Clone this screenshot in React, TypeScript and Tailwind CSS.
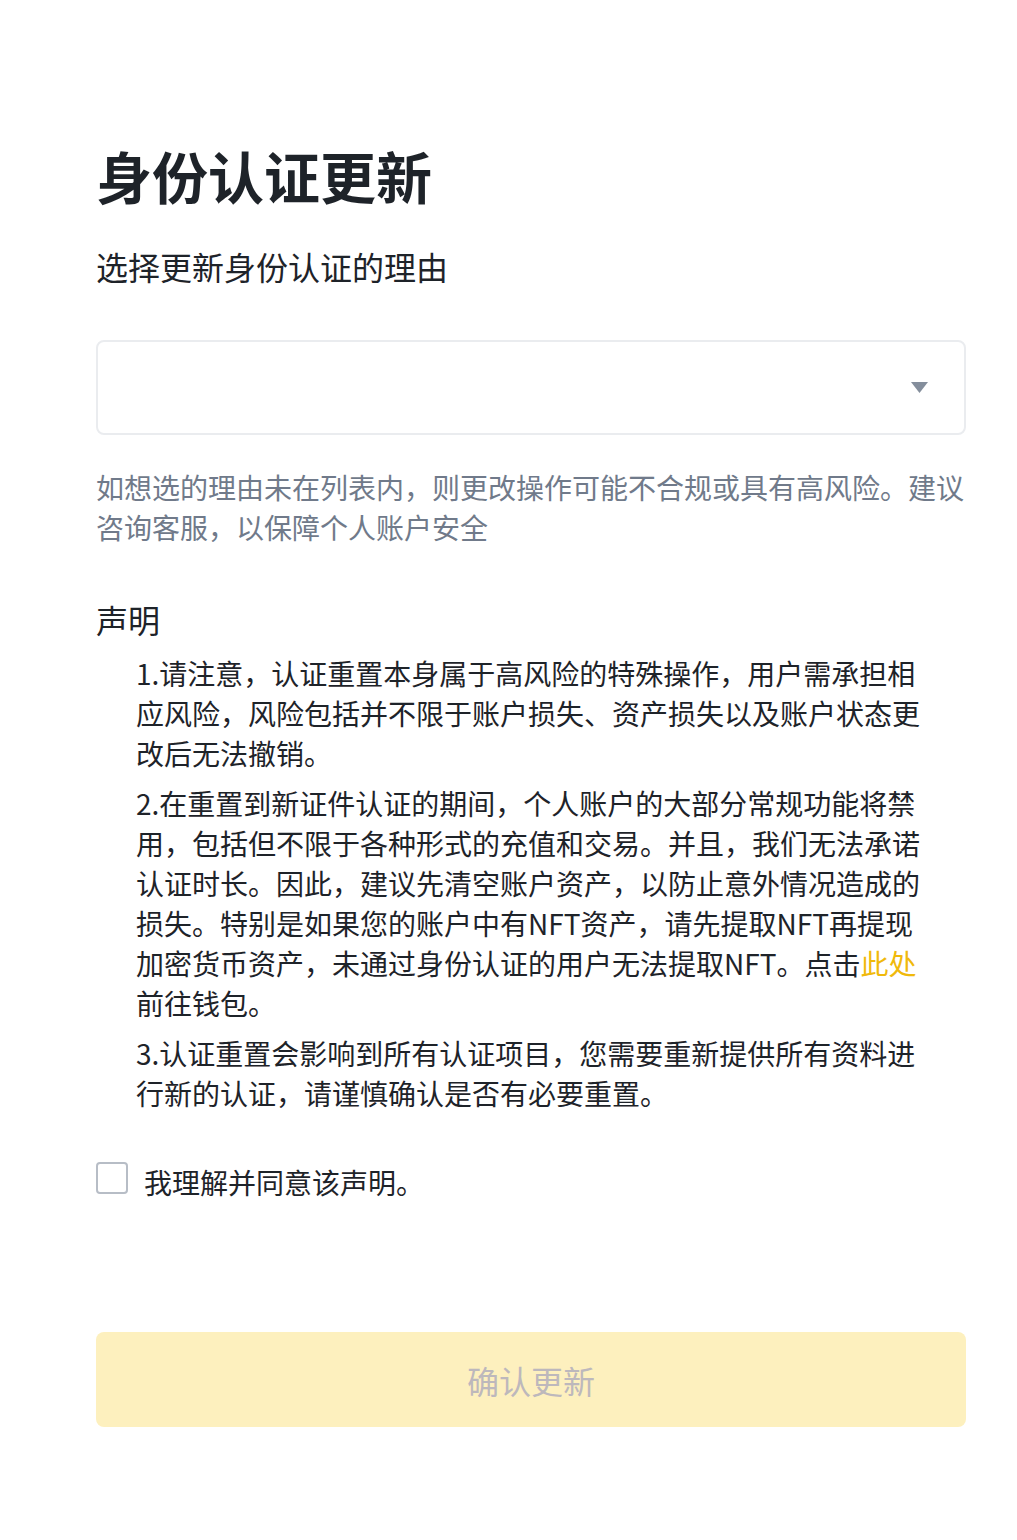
import { useState } from "react";

const FONT = "font-['Noto_Sans_CJK_SC','Noto_Sans',sans-serif]";

const items: React.ReactNode[] = [
  "1.请注意，认证重置本身属于高风险的特殊操作，用户需承担相应风险，风险包括并不限于账户损失、资产损失以及账户状态更改后无法撤销。",
  <>
    2.在重置到新证件认证的期间，个人账户的大部分常规功能将禁用，包括但不限于各种形式的充值和交易。并且，我们无法承诺认证时长。因此，建议先清空账户资产，以防止意外情况造成的损失。特别是如果您的账户中有NFT资产，请先提取NFT再提现加密货币资产，未通过身份认证的用户无法提取NFT。点击
    <a href="#" className="text-[#f0b90b]">
      此处
    </a>
    前往钱包。
  </>,
  "3.认证重置会影响到所有认证项目，您需要重新提供所有资料进行新的认证，请谨慎确认是否有必要重置。",
];

export default function App() {
  const [agreed, setAgreed] = useState(false);

  return (
    <div className={`${FONT} min-h-[1540px] bg-white pl-[96px] pr-[51px] pt-[143px] text-[#1e2329]`}>
      <h1 className="text-[56px] font-bold leading-[64px]">身份认证更新</h1>

      <div className="mt-[39px] text-[32px] leading-[40px]">选择更新身份认证的理由</div>

      {/* reason select */}
      <button className="mt-[54px] flex h-[95px] w-full items-center justify-end rounded-[8px] border-2 border-[#eaecef] bg-white pr-[36px]">
        <svg width="17" height="11" viewBox="0 0 17 11">
          <path d="M0 0h17L8.5 11z" fill="#848e9c" />
        </svg>
      </button>

      <p className="mt-[32px] text-[28px] leading-[40px] text-[#707a8a]">
        如想选的理由未在列表内，则更改操作可能不合规或具有高风险。建议咨询客服，以保障个人账户安全
      </p>

      <div className="mt-[52px] text-[32px] leading-[40px]">声明</div>

      <div className="mt-[14px] flex flex-col gap-[10px] px-[40px] text-[28px] leading-[40px]">
        {items.map((t, i) => (
          <div key={i}>{t}</div>
        ))}
      </div>

      <label className="mt-[49px] flex cursor-pointer items-start gap-[16px]">
        <span
          onClick={() => setAgreed(!agreed)}
          className="h-[32px] w-[32px] shrink-0 rounded-[4px] border-2 border-[#b7bdc6]"
        />
        <span className="text-[28px] leading-[40px]">我理解并同意该声明。</span>
      </label>

      <button
        disabled={!agreed}
        className="mt-[130px] flex h-[95px] w-full items-center justify-center rounded-[8px] bg-[#fdf0be] text-[32px] text-[#bdb8bc]"
      >
        确认更新
      </button>
    </div>
  );
}
